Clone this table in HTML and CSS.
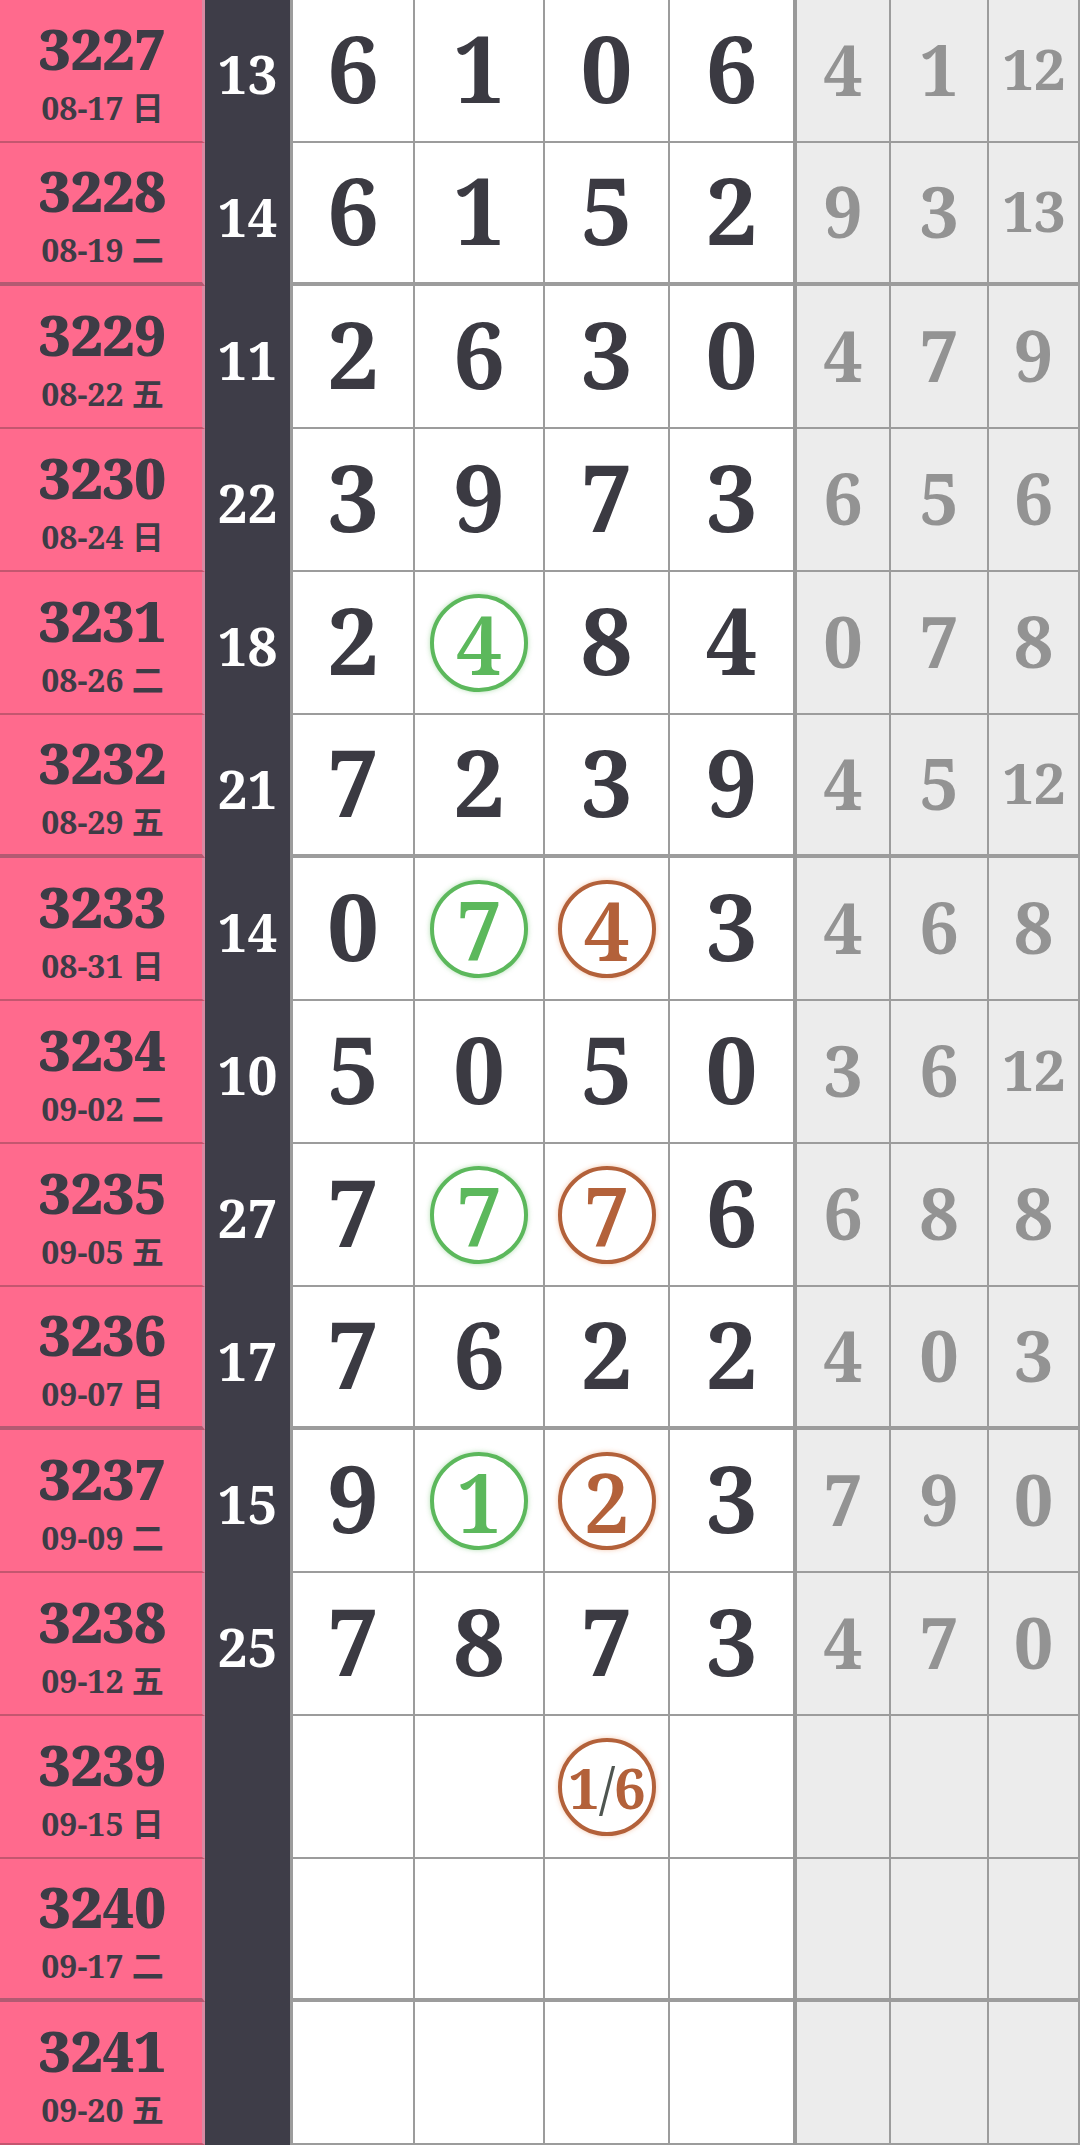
FILE: index.html
```html
<!DOCTYPE html>
<html lang="zh">
<head>
    <meta charset="UTF-8">
    <meta name="viewport" content="width=device-width, initial-scale=1">
    <title>走势</title>
    <link rel="stylesheet" href="styles.css">
</head>
<body>
<div class="board">
    <div class="row">
        <div class="no"><b>3227</b><span>08-17 日</span></div>
        <div class="sum">13</div>
        <div class="main"><div class="cell">6</div><div class="cell">1</div><div class="cell">0</div><div class="cell">6</div></div>
        <div class="side"><div class="cell">4</div><div class="cell">1</div><div class="cell two">12</div></div>
    </div>
    <div class="row end">
        <div class="no"><b>3228</b><span>08-19 二</span></div>
        <div class="sum">14</div>
        <div class="main"><div class="cell">6</div><div class="cell">1</div><div class="cell">5</div><div class="cell">2</div></div>
        <div class="side"><div class="cell">9</div><div class="cell">3</div><div class="cell two">13</div></div>
    </div>
    <div class="row">
        <div class="no"><b>3229</b><span>08-22 五</span></div>
        <div class="sum">11</div>
        <div class="main"><div class="cell">2</div><div class="cell">6</div><div class="cell">3</div><div class="cell">0</div></div>
        <div class="side"><div class="cell">4</div><div class="cell">7</div><div class="cell">9</div></div>
    </div>
    <div class="row">
        <div class="no"><b>3230</b><span>08-24 日</span></div>
        <div class="sum">22</div>
        <div class="main"><div class="cell">3</div><div class="cell">9</div><div class="cell">7</div><div class="cell">3</div></div>
        <div class="side"><div class="cell">6</div><div class="cell">5</div><div class="cell">6</div></div>
    </div>
    <div class="row">
        <div class="no"><b>3231</b><span>08-26 二</span></div>
        <div class="sum">18</div>
        <div class="main"><div class="cell">2</div><div class="cell"><em class="ball green">4</em></div><div class="cell">8</div><div class="cell">4</div></div>
        <div class="side"><div class="cell">0</div><div class="cell">7</div><div class="cell">8</div></div>
    </div>
    <div class="row end">
        <div class="no"><b>3232</b><span>08-29 五</span></div>
        <div class="sum">21</div>
        <div class="main"><div class="cell">7</div><div class="cell">2</div><div class="cell">3</div><div class="cell">9</div></div>
        <div class="side"><div class="cell">4</div><div class="cell">5</div><div class="cell two">12</div></div>
    </div>
    <div class="row">
        <div class="no"><b>3233</b><span>08-31 日</span></div>
        <div class="sum">14</div>
        <div class="main"><div class="cell">0</div><div class="cell"><em class="ball green">7</em></div><div class="cell"><em class="ball brown">4</em></div><div class="cell">3</div></div>
        <div class="side"><div class="cell">4</div><div class="cell">6</div><div class="cell">8</div></div>
    </div>
    <div class="row">
        <div class="no"><b>3234</b><span>09-02 二</span></div>
        <div class="sum">10</div>
        <div class="main"><div class="cell">5</div><div class="cell">0</div><div class="cell">5</div><div class="cell">0</div></div>
        <div class="side"><div class="cell">3</div><div class="cell">6</div><div class="cell two">12</div></div>
    </div>
    <div class="row">
        <div class="no"><b>3235</b><span>09-05 五</span></div>
        <div class="sum">27</div>
        <div class="main"><div class="cell">7</div><div class="cell"><em class="ball green">7</em></div><div class="cell"><em class="ball brown">7</em></div><div class="cell">6</div></div>
        <div class="side"><div class="cell">6</div><div class="cell">8</div><div class="cell">8</div></div>
    </div>
    <div class="row end">
        <div class="no"><b>3236</b><span>09-07 日</span></div>
        <div class="sum">17</div>
        <div class="main"><div class="cell">7</div><div class="cell">6</div><div class="cell">2</div><div class="cell">2</div></div>
        <div class="side"><div class="cell">4</div><div class="cell">0</div><div class="cell">3</div></div>
    </div>
    <div class="row">
        <div class="no"><b>3237</b><span>09-09 二</span></div>
        <div class="sum">15</div>
        <div class="main"><div class="cell">9</div><div class="cell"><em class="ball green">1</em></div><div class="cell"><em class="ball brown">2</em></div><div class="cell">3</div></div>
        <div class="side"><div class="cell">7</div><div class="cell">9</div><div class="cell">0</div></div>
    </div>
    <div class="row">
        <div class="no"><b>3238</b><span>09-12 五</span></div>
        <div class="sum">25</div>
        <div class="main"><div class="cell">7</div><div class="cell">8</div><div class="cell">7</div><div class="cell">3</div></div>
        <div class="side"><div class="cell">4</div><div class="cell">7</div><div class="cell">0</div></div>
    </div>
    <div class="row">
        <div class="no"><b>3239</b><span>09-15 日</span></div>
        <div class="sum"></div>
        <div class="main"><div class="cell"></div><div class="cell"></div><div class="cell"><em class="ball brown frac">1<i>/</i>6</em></div><div class="cell"></div></div>
        <div class="side"><div class="cell"></div><div class="cell"></div><div class="cell"></div></div>
    </div>
    <div class="row end">
        <div class="no"><b>3240</b><span>09-17 二</span></div>
        <div class="sum"></div>
        <div class="main"><div class="cell"></div><div class="cell"></div><div class="cell"></div><div class="cell"></div></div>
        <div class="side"><div class="cell"></div><div class="cell"></div><div class="cell"></div></div>
    </div>
    <div class="row">
        <div class="no"><b>3241</b><span>09-20 五</span></div>
        <div class="sum"></div>
        <div class="main"><div class="cell"></div><div class="cell"></div><div class="cell"></div><div class="cell"></div></div>
        <div class="side"><div class="cell"></div><div class="cell"></div><div class="cell"></div></div>
    </div>
</div>
</body>
</html>
```
FILE: styles.css
```css
*{
    margin: 0;
    padding: 0;
    box-sizing: border-box;
}
html,body{
    height: 100%;
    overflow: hidden;
}
body{
    background: #ffffff;
    font-family: "Noto Serif", "DejaVu Serif", "Noto Sans CJK SC", serif;
    font-weight: bold;
    color: #3b3a42;
}
.row{
    display: flex;
    height: 143px;
}
.no{
    width: 205px;
    background-color: #ff6a8d;
    border-right: 3px solid #d98aa3;
    border-bottom: 2px solid #c4566f;
    display: flex;
    flex-direction: column;
    align-items: center;
    justify-content: center;
    padding-left: 3px;
    color: #3d3c46;
}
.no b{
    font-size: 56px;
    line-height: 75px;
}
.no span{
    font-size: 32px;
    line-height: 44px;
}
.sum{
    width: 85px;
    background-color: #3e3d48;
    color: #ffffff;
    font-size: 53px;
    line-height: 1;
    display: flex;
    align-items: center;
    justify-content: center;
    padding-top: 3px;
}
.main{
    width: 503px;
    display: grid;
    grid-template-columns: 122px 130px 125px 123px;
    border-left: 3px solid #9c9c9c;
}
.side{
    width: 287px;
    display: grid;
    grid-template-columns: 94px 98px 91px;
    border-left: 4px solid #999999;
    background-color: #ececec;
}
.cell{
    display: flex;
    align-items: center;
    justify-content: center;
    line-height: 1;
    padding-bottom: 4px;
    border-right: 2px solid #9c9c9c;
    border-bottom: 2px solid #9c9c9c;
}
.main .cell{
    font-size: 92px;
    padding-bottom: 6px;
}
.main .cell:last-child{
    border-right: none;
}
.side .cell{
    font-size: 70px;
    color: #939393;
}
.side .cell.two{
    font-size: 57px;
    letter-spacing: -1px;
}
.row.end .no,
.row.end .cell{
    border-bottom-width: 4px;
}
.row.end .no{
    border-bottom-color: #b35a72;
}
.ball{
    width: 98px;
    height: 98px;
    border: 4px solid;
    border-radius: 50%;
    display: flex;
    align-items: center;
    justify-content: center;
    font-style: normal;
    font-weight: 600;
    font-size: 82px;
    line-height: 1;
    background-color: #ffffff;
}
.main .cell .ball{
    margin-top: 6px;
}
.ball.green{
    color: #5cb85c;
    border-color: #5cb85c;
    box-shadow: 0 0 5px rgba(92,184,92,0.45);
}
.ball.brown{
    color: #b3613a;
    border-color: #b3613a;
    box-shadow: 0 0 5px rgba(230,130,70,0.45);
}
.ball.frac{
    font-size: 56px;
    font-weight: bold;
    letter-spacing: -1px;
}
.ball.frac i{
    font-style: normal;
    font-weight: normal;
    color: #4f5550;
}
```
